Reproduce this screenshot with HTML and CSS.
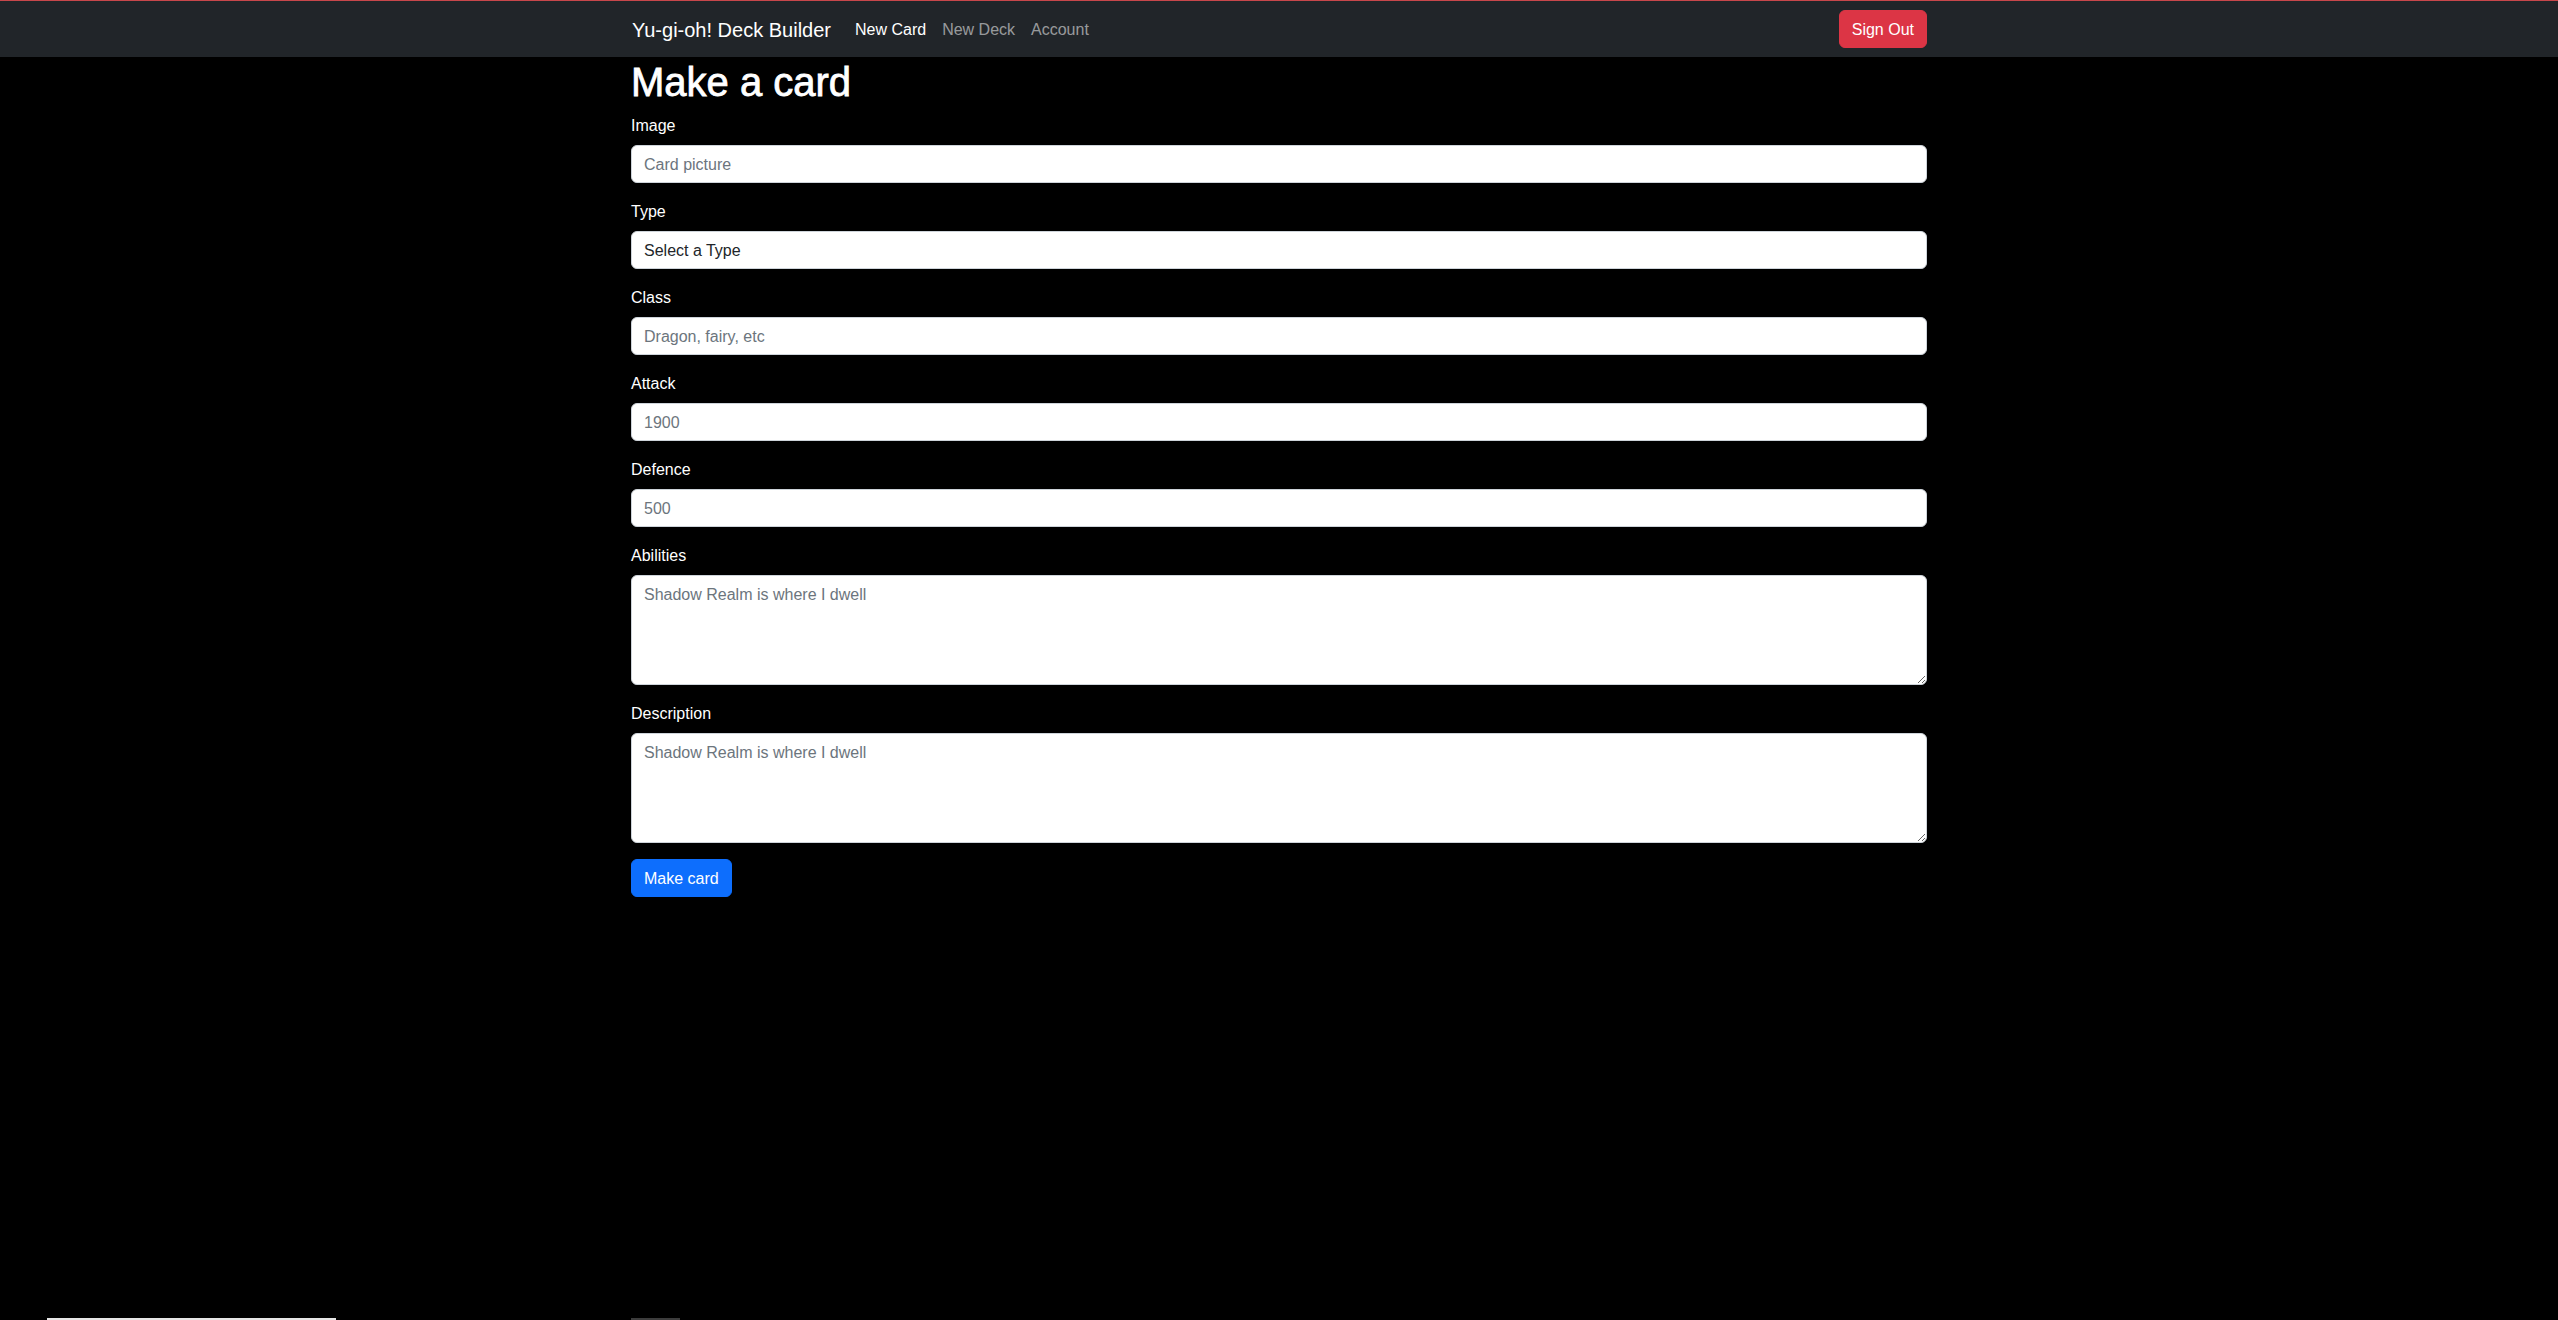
FILE: index.html
```html
<!DOCTYPE html>
<html lang="en">
<head>
<meta charset="utf-8">
<title>Yu-gi-oh! Deck Builder</title>
<link rel="stylesheet" href="styles.css">
</head>
<body>
<nav class="navbar">
  <div class="container nav-inner">
    <div class="nav-left">
      <a class="brand" href="#">Yu-gi-oh! Deck Builder</a>
      <ul class="nav-links">
        <li><a class="nav-link active" href="#">New Card</a></li>
        <li><a class="nav-link" href="#">New Deck</a></li>
        <li><a class="nav-link" href="#">Account</a></li>
      </ul>
    </div>
    <button class="btn btn-danger" type="button">Sign Out</button>
  </div>
</nav>
<main class="container">
  <h1 class="title">Make a card</h1>
  <form class="card-form">
    <div class="field">
      <label class="form-label" for="image">Image</label>
      <input class="form-control" id="image" type="text" placeholder="Card picture">
    </div>
    <div class="field">
      <label class="form-label" for="type">Type</label>
      <select class="form-control" id="type">
        <option>Select a Type</option>
      </select>
    </div>
    <div class="field">
      <label class="form-label" for="class">Class</label>
      <input class="form-control" id="class" type="text" placeholder="Dragon, fairy, etc">
    </div>
    <div class="field">
      <label class="form-label" for="attack">Attack</label>
      <input class="form-control" id="attack" type="text" placeholder="1900">
    </div>
    <div class="field">
      <label class="form-label" for="defence">Defence</label>
      <input class="form-control" id="defence" type="text" placeholder="500">
    </div>
    <div class="field">
      <label class="form-label" for="abilities">Abilities</label>
      <textarea class="form-control" id="abilities" rows="4" placeholder="Shadow Realm is where I dwell"></textarea>
    </div>
    <div class="field">
      <label class="form-label" for="description">Description</label>
      <textarea class="form-control" id="description" rows="4" placeholder="Shadow Realm is where I dwell"></textarea>
    </div>
    <button class="btn btn-primary" type="submit">Make card</button>
  </form>
</main>
<div class="bottom-strip">
  <span class="strip-light"></span>
  <span class="strip-dark"></span>
</div>
</body>
</html>
```

FILE: styles.css
```css
* {
  box-sizing: border-box;
}

html, body {
  margin: 0;
  padding: 0;
}

body {
  background: #000;
  color: #fff;
  font-family: "Liberation Sans", Arial, sans-serif;
  font-size: 16px;
  line-height: 24px;
  overflow: hidden;
  height: 1320px;
}

.container {
  width: 100%;
  max-width: 1320px;
  margin: 0 auto;
  padding: 0 12px;
}

.navbar {
  background: #212529;
  border-top: 1px solid #c8474b;
  padding: 8px 0;
}

.nav-inner {
  display: flex;
  align-items: center;
  justify-content: space-between;
}

.nav-left {
  display: flex;
  align-items: center;
}

.brand {
  color: #fff;
  text-decoration: none;
  font-size: 20px;
  line-height: 30px;
  padding: 6px 0 4px;
  margin-right: 16px;
  margin-left: 1px;
}

.nav-links {
  display: flex;
  list-style: none;
  margin: 0;
  padding: 0;
}

.nav-link {
  display: block;
  padding: 9px 8px 7px;
  color: rgba(255, 255, 255, 0.55);
  text-decoration: none;
  font-size: 16px;
  line-height: 24px;
}

.nav-link.active {
  color: #fff;
}

.btn {
  display: inline-block;
  font-family: inherit;
  font-size: 16px;
  line-height: 24px;
  padding: 7px 12px 5px;
  border: 1px solid transparent;
  border-radius: 6px;
  color: #fff;
  cursor: pointer;
}

.btn-danger {
  background: #dc3545;
  border-color: #dc3545;
}

.btn-primary {
  background: #0d6efd;
  border-color: #0d6efd;
}

.title {
  font-size: 40px;
  line-height: 48px;
  font-weight: 400;
  -webkit-text-stroke: 0.8px #fff;
  padding-top: 1px;
  height: 48px;
  margin: 0 0 8px;
}

.card-form {
  display: flex;
  flex-direction: column;
  align-items: flex-start;
}

.field {
  width: 100%;
  margin-bottom: 16px;
}

.form-label {
  display: inline-block;
  margin-bottom: 8px;
  padding-top: 1px;
  height: 24px;
  color: #fff;
}

.form-control {
  display: block;
  width: 100%;
  padding: 7px 12px 5px;
  font-family: inherit;
  font-size: 16px;
  line-height: 24px;
  color: #212529;
  background: #fff;
  border: 1px solid #ced4da;
  border-radius: 6px;
  appearance: none;
  -webkit-appearance: none;
  margin: 0;
}

.form-control::placeholder {
  color: #6c757d;
  opacity: 1;
}

textarea.form-control {
  resize: vertical;
  min-height: 110px;
  height: 110px;
}

.bottom-strip {
  display: flex;
  margin-top: 421px;
  height: 2px;
}

.strip-light {
  margin-left: 47px;
  width: 289px;
  background: #e6e6e6;
}

.strip-dark {
  margin-left: 295px;
  width: 49px;
  background: #3c3c3c;
}
```
